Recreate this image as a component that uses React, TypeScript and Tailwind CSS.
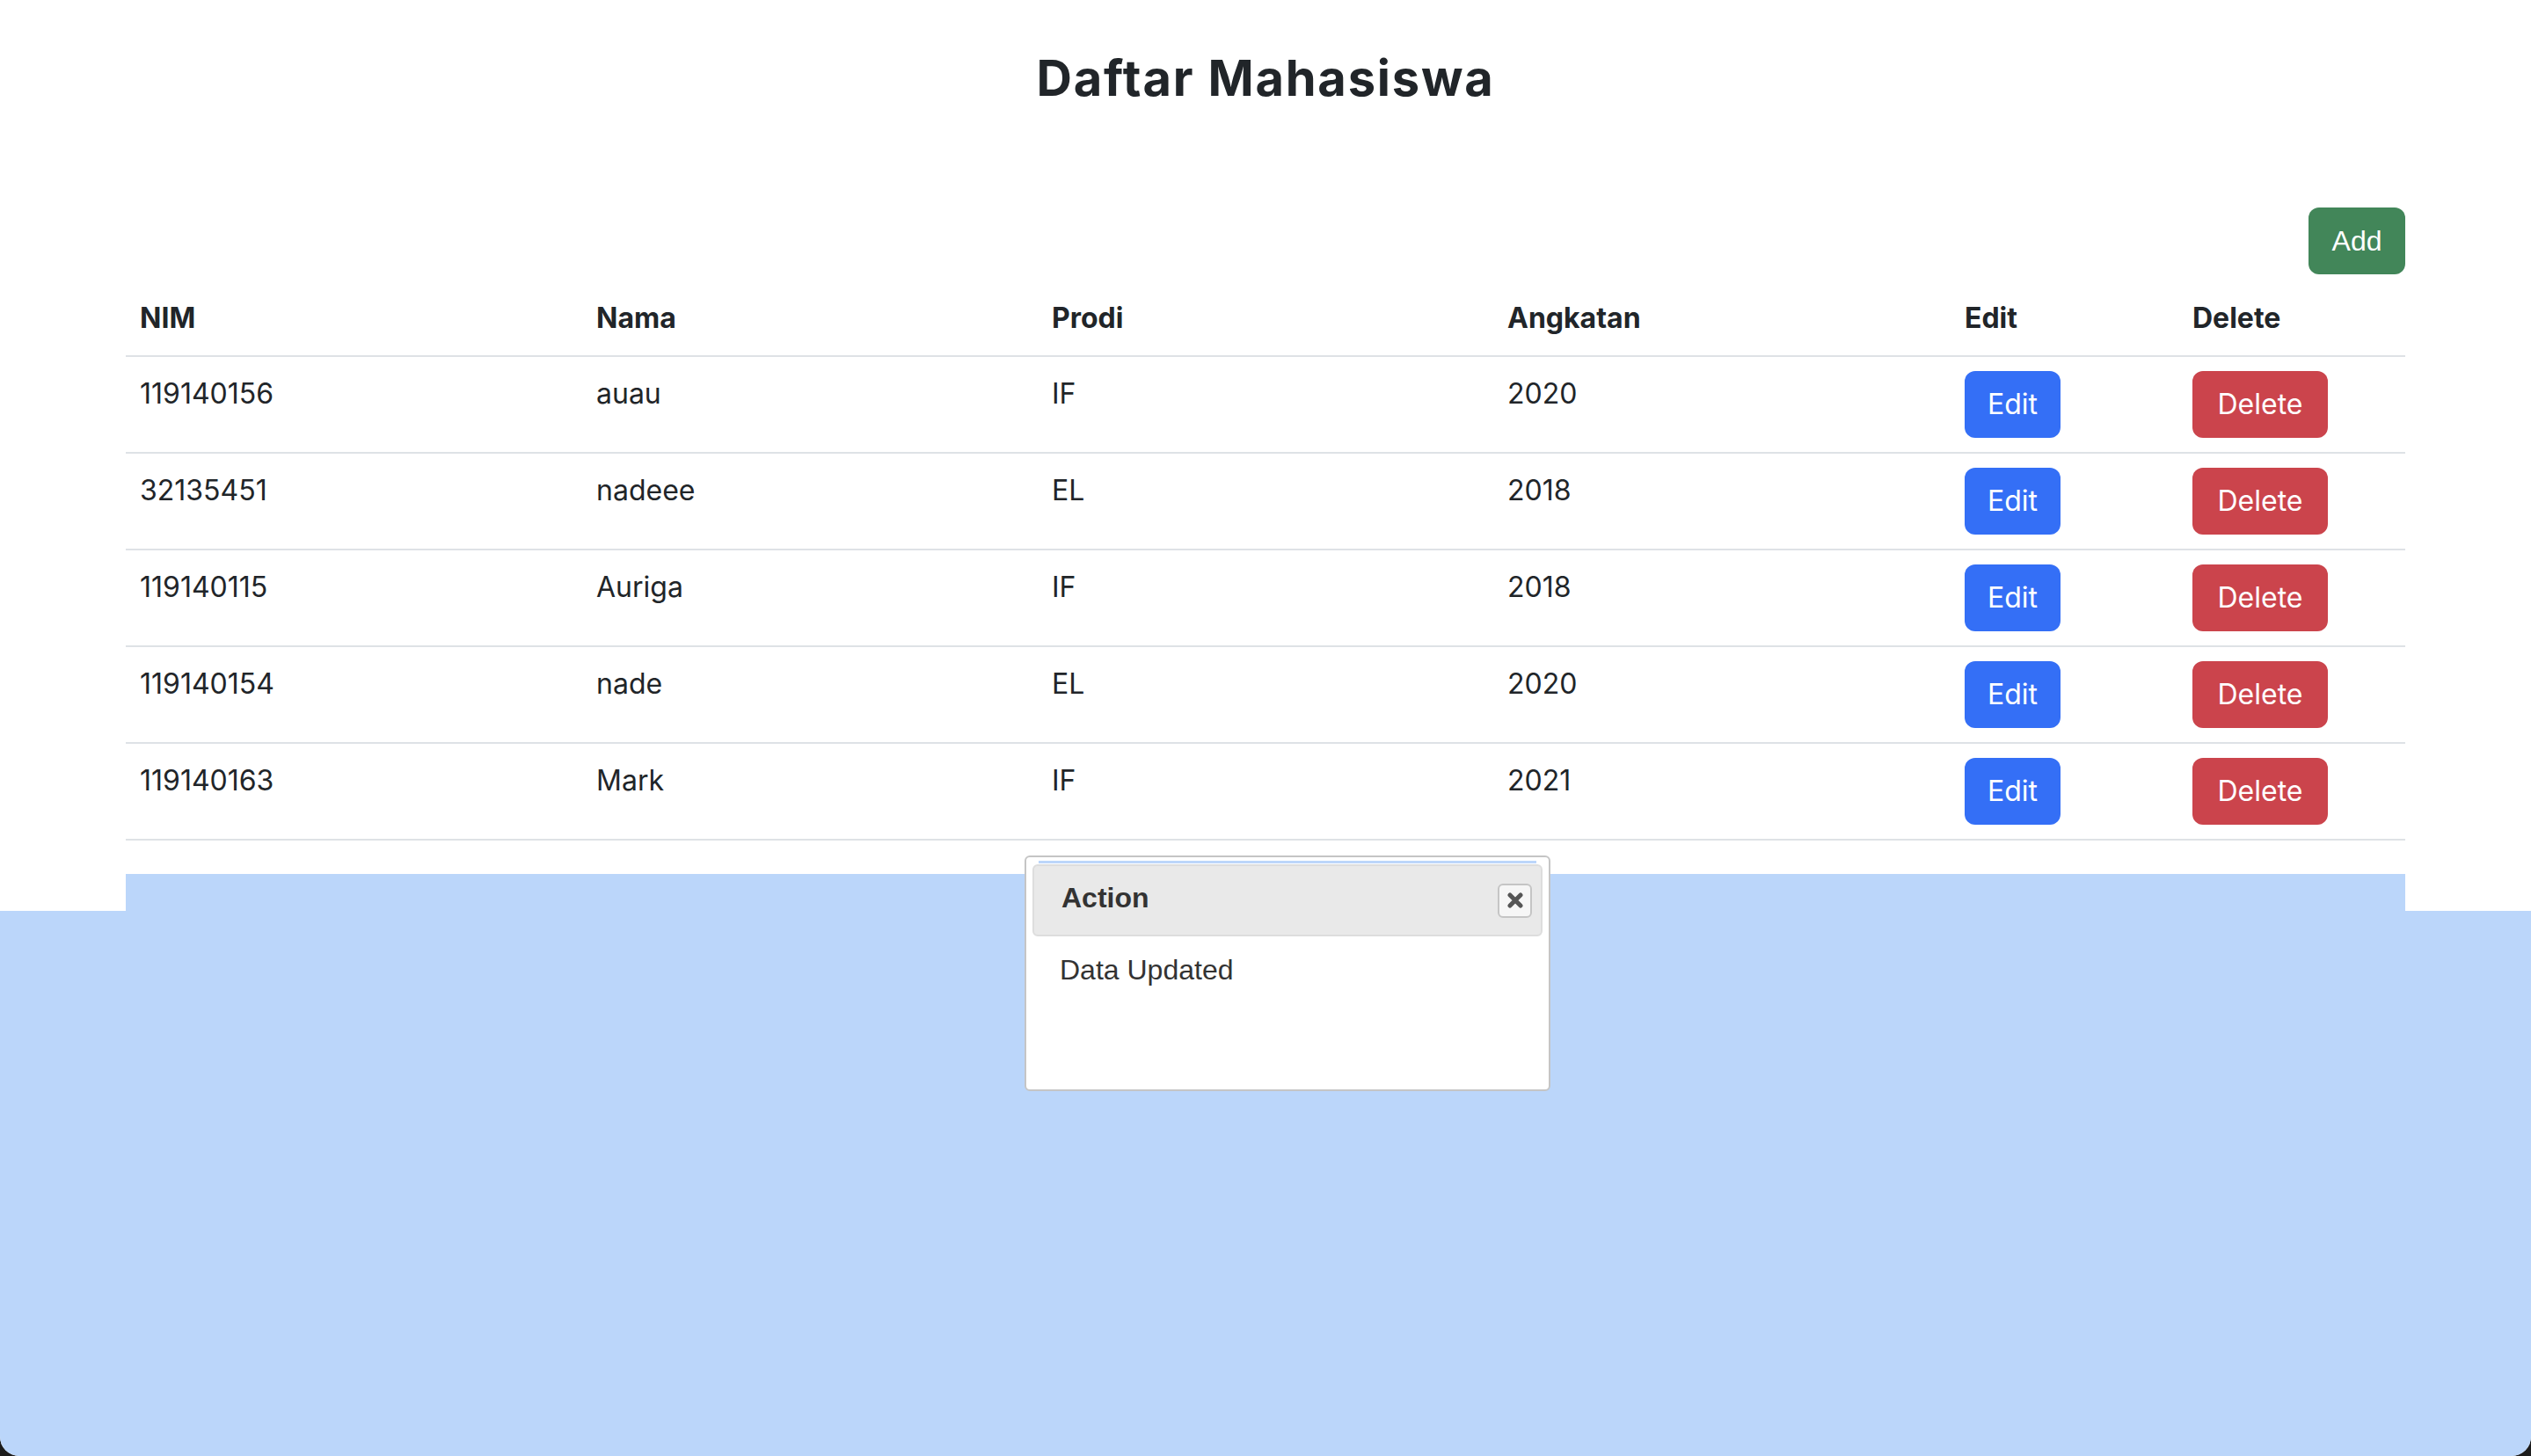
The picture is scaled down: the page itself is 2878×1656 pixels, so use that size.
import React from 'react';

const students = [
  { nim: '119140156', nama: 'auau', prodi: 'IF', angkatan: '2020' },
  { nim: '32135451', nama: 'nadeee', prodi: 'EL', angkatan: '2018' },
  { nim: '119140115', nama: 'Auriga', prodi: 'IF', angkatan: '2018' },
  { nim: '119140154', nama: 'nade', prodi: 'EL', angkatan: '2020' },
  { nim: '119140163', nama: 'Mark', prodi: 'IF', angkatan: '2021' },
];

const sans = "font-['Inter','Noto_Sans',sans-serif]";

function Dialog() {
  return (
    <div className="absolute left-[1165px] top-[973px] w-[598px] h-[268px] bg-white border-2 border-[#c5c5c5] rounded-[6px] p-[7px] font-['Liberation_Sans',Arial,sans-serif] text-[#333]">
      <div className="h-[3px] mx-[7px] -mt-[3px] mb-[1px] bg-[#bcd6fa]" />
      <div className="flex items-center justify-between h-[82px] bg-[#e9e9e9] border-2 border-[#dddddd] rounded-[6px] pl-[31px] pr-[10px]">
        <span className="text-[32px] font-bold leading-none pb-[6px]">Action</span>
        <button className="w-[39px] h-[39px] flex items-center justify-center bg-[#f6f6f6] border-2 border-[#c5c5c5] rounded-[6px]">
          <svg width="20" height="20" viewBox="0 0 20 20">
            <path d="M4 4 L16 16 M16 4 L4 16" stroke="#555" strokeWidth="5" strokeLinecap="round" />
          </svg>
        </button>
      </div>
      <p className="pl-[31px] pt-[14px] text-[32px] leading-[48px]">Data Updated</p>
    </div>
  );
}

export default function App() {
  return (
    <div className="w-[2878px] h-[1656px] bg-[#1c1c1c]">
      <div className="relative w-full h-full bg-white rounded-b-[22px] overflow-hidden flex flex-col">
        <h1 className={`${sans} pt-[56px] text-center text-[56px] leading-[67px] font-bold tracking-[1.8px] text-[#212529]`}>
          Daftar Mahasiswa
        </h1>

        <div className="w-[2592px] mx-auto mt-[113px]">
          <div className="flex justify-end mb-[12px]">
            <button className="w-[110px] h-[76px] bg-[#428659] text-white rounded-[12px] text-[32px] font-['Liberation_Sans',Arial,sans-serif]">
              Add
            </button>
          </div>

          <table className={`${sans} w-full table-fixed border-collapse text-[32px] leading-[48px] text-[#212529]`}>
            <colgroup>
              <col className="w-[519px]" />
              <col className="w-[518px]" />
              <col className="w-[518px]" />
              <col className="w-[520px]" />
              <col className="w-[259px]" />
              <col />
            </colgroup>
            <thead>
              <tr className="border-b-2 border-[#dee2e6]">
                {['NIM', 'Nama', 'Prodi', 'Angkatan', 'Edit', 'Delete'].map((h) => (
                  <th key={h} className="text-left font-bold px-[16px] pt-[14px] pb-[18px]">
                    {h}
                  </th>
                ))}
              </tr>
            </thead>
            <tbody>
              {students.map((s) => (
                <tr key={s.nim} className="border-b-2 border-[#dee2e6] align-top">
                  <td className="px-[16px] pt-[18px]">{s.nim}</td>
                  <td className="px-[16px] pt-[18px]">{s.nama}</td>
                  <td className="px-[16px] pt-[18px]">{s.prodi}</td>
                  <td className="px-[16px] pt-[18px]">{s.angkatan}</td>
                  <td className="px-[16px] py-[16px]">
                    <button className="w-[109px] h-[76px] bg-[#346ff6] text-white rounded-[12px]">Edit</button>
                  </td>
                  <td className="px-[16px] py-[16px]">
                    <button className="w-[154px] h-[76px] bg-[#cb444c] text-white rounded-[12px]">Delete</button>
                  </td>
                </tr>
              ))}
            </tbody>
          </table>

          <div className="h-[42px] mt-[38px] bg-[#bbd6fa]" />
        </div>

        <div className="flex-1 bg-[#bbd6fa]" />

        <Dialog />
      </div>
    </div>
  );
}
